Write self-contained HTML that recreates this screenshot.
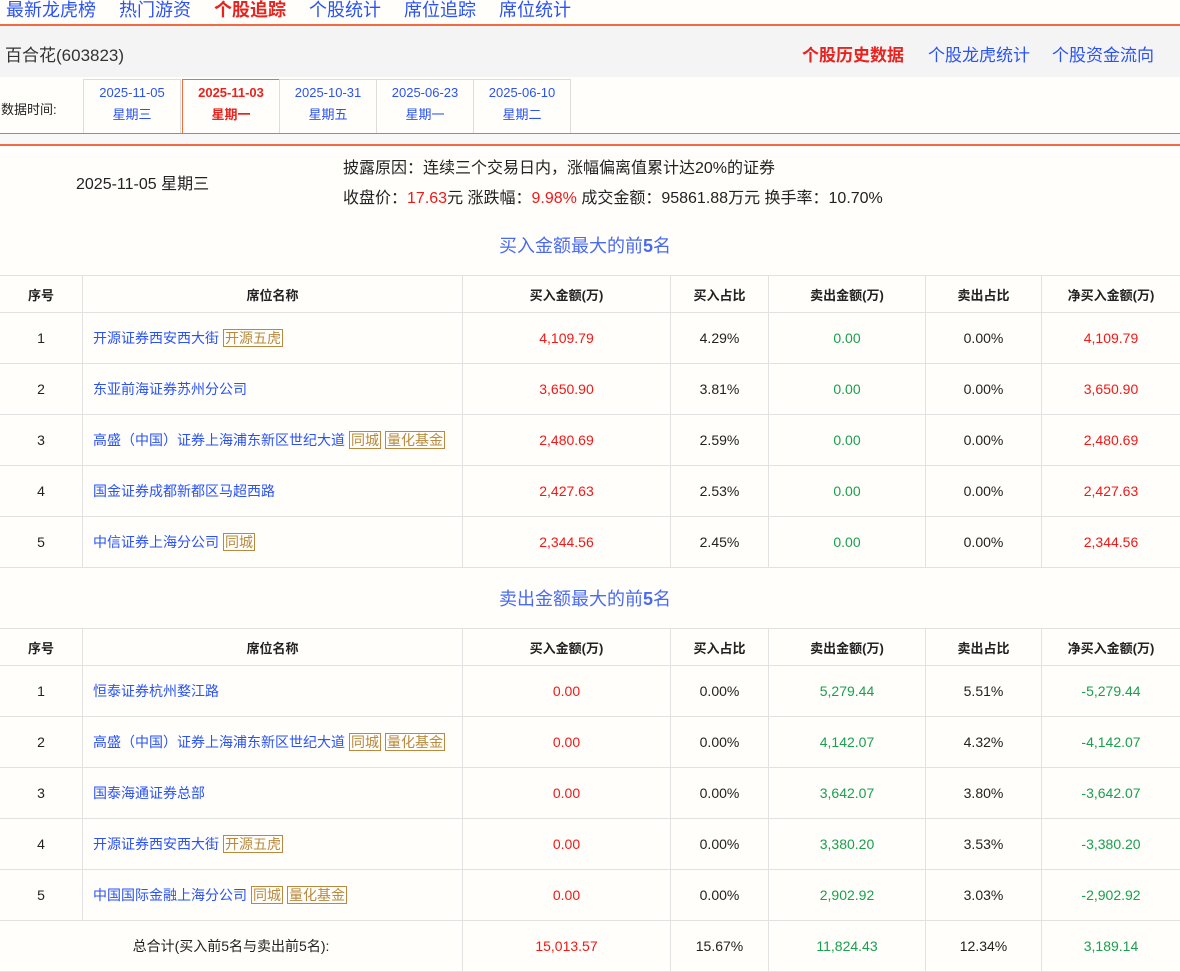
<!DOCTYPE html>
<html><head><meta charset="utf-8"><style>
*{margin:0;padding:0;box-sizing:border-box}
body{width:1180px;height:954px;overflow:hidden;background:#fffefa;font-family:"Liberation Sans","Noto Sans CJK SC",sans-serif;position:relative;color:#222}
.a{position:absolute;white-space:nowrap}
.nav{top:-4px;left:6px;font-size:18px;color:#2a52f5}
.nav span{margin-right:23px}
.nav .on{color:#e8231f;font-weight:bold}
.ol{position:absolute;left:0;width:1180px;height:2px;background:#f36b43}
.band{position:absolute;left:0;top:26px;width:1180px;height:51px;background:#f4f4f4}
.tab{position:absolute;top:79px;height:54px;width:98px;border:1px solid #ddd;border-bottom:none;text-align:center;font-size:13px;color:#2a52f5;line-height:22px;padding-top:2px;background:#fffefa}
.tab.on{border:1px solid #f36b43;border-bottom:none;color:#e8231f;font-weight:bold}
table{position:absolute;left:-1px;width:1181px;border-collapse:collapse;table-layout:fixed;font-size:14px}
td,th{border:1px solid #e2e2e2;text-align:center;height:51px}
th{height:37px;font-size:13px}
td.n{text-align:left;padding-left:10px;color:#2a52f5;font-size:14px}
.tg{border:1px solid #b8893f;color:#b8893f;padding:0 1px;margin-left:4px}
.r{color:#f01818}.g{color:#1a9f4f}
.t{font-size:18px;color:#4a6af0;text-align:center;width:1180px;left:-5px}
</style></head><body>
<div class="a nav"><span>最新龙虎榜</span><span>热门游资</span><span class="on">个股追踪</span><span>个股统计</span><span>席位追踪</span><span>席位统计</span></div>
<div class="ol" style="top:24px"></div>
<div class="band"></div>
<div class="a" style="left:5px;top:41px;font-size:17px;color:#333">百合花(603823)</div>
<div class="a" style="left:802px;top:41px;font-size:17px;color:#e8231f;font-weight:bold">个股历史数据</div>
<div class="a" style="left:928px;top:41px;font-size:17px;color:#2a52f5">个股龙虎统计</div>
<div class="a" style="left:1052px;top:41px;font-size:17px;color:#2a52f5">个股资金流向</div>
<div class="a" style="left:1px;top:99px;font-size:13px">数据时间:</div>
<div class="tab" style="left:83px">2025-11-05<br>星期三</div>
<div class="tab on" style="left:182px">2025-11-03<br>星期一</div>
<div class="tab" style="left:279px">2025-10-31<br>星期五</div>
<div class="tab" style="left:376px">2025-06-23<br>星期一</div>
<div class="tab" style="left:473px">2025-06-10<br>星期二</div>
<div class="ol" style="top:133px;height:1px;background:#f36b43"></div>
<div class="a" style="left:0;top:134px;width:1180px;height:10px;background:#f8f8f8"></div>
<div class="ol" style="top:144px"></div>
<div class="a" style="left:76px;top:170px;font-size:16px">2025-11-05 星期三</div>
<div class="a" style="left:343px;top:154px;font-size:16px">披露原因：连续三个交易日内，涨幅偏离值累计达20%的证券</div>
<div class="a" style="left:343px;top:184px;font-size:16px">收盘价：<span class="r">17.63</span>元 涨跌幅：<span class="r">9.98%</span> 成交金额：95861.88万元 换手率：10.70%</div>
<div class="a t" style="top:232px">买入金额最大的前<b>5</b>名</div>
<table style="top:275px">
<colgroup><col style="width:83px"><col style="width:380px"><col style="width:208px"><col style="width:98px"><col style="width:157px"><col style="width:116px"><col style="width:139px"></colgroup>
<tr><th>序号</th><th>席位名称</th><th>买入金额(万)</th><th>买入占比</th><th>卖出金额(万)</th><th>卖出占比</th><th>净买入金额(万)</th></tr>
<tr><td>1</td><td class="n">开源证券西安西大街<span class="tg">开源五虎</span></td><td class="r">4,109.79</td><td>4.29%</td><td class="g">0.00</td><td>0.00%</td><td class="r">4,109.79</td></tr>
<tr><td>2</td><td class="n">东亚前海证券苏州分公司</td><td class="r">3,650.90</td><td>3.81%</td><td class="g">0.00</td><td>0.00%</td><td class="r">3,650.90</td></tr>
<tr><td>3</td><td class="n">高盛（中国）证券上海浦东新区世纪大道<span class="tg">同城</span><span class="tg">量化基金</span></td><td class="r">2,480.69</td><td>2.59%</td><td class="g">0.00</td><td>0.00%</td><td class="r">2,480.69</td></tr>
<tr><td>4</td><td class="n">国金证券成都新都区马超西路</td><td class="r">2,427.63</td><td>2.53%</td><td class="g">0.00</td><td>0.00%</td><td class="r">2,427.63</td></tr>
<tr><td>5</td><td class="n">中信证券上海分公司<span class="tg">同城</span></td><td class="r">2,344.56</td><td>2.45%</td><td class="g">0.00</td><td>0.00%</td><td class="r">2,344.56</td></tr>
</table>
<div class="a t" style="top:585px">卖出金额最大的前<b>5</b>名</div>
<table style="top:628px">
<colgroup><col style="width:83px"><col style="width:380px"><col style="width:208px"><col style="width:98px"><col style="width:157px"><col style="width:116px"><col style="width:139px"></colgroup>
<tr><th>序号</th><th>席位名称</th><th>买入金额(万)</th><th>买入占比</th><th>卖出金额(万)</th><th>卖出占比</th><th>净买入金额(万)</th></tr>
<tr><td>1</td><td class="n">恒泰证券杭州婺江路</td><td class="r">0.00</td><td>0.00%</td><td class="g">5,279.44</td><td>5.51%</td><td class="g">-5,279.44</td></tr>
<tr><td>2</td><td class="n">高盛（中国）证券上海浦东新区世纪大道<span class="tg">同城</span><span class="tg">量化基金</span></td><td class="r">0.00</td><td>0.00%</td><td class="g">4,142.07</td><td>4.32%</td><td class="g">-4,142.07</td></tr>
<tr><td>3</td><td class="n">国泰海通证券总部</td><td class="r">0.00</td><td>0.00%</td><td class="g">3,642.07</td><td>3.80%</td><td class="g">-3,642.07</td></tr>
<tr><td>4</td><td class="n">开源证券西安西大街<span class="tg">开源五虎</span></td><td class="r">0.00</td><td>0.00%</td><td class="g">3,380.20</td><td>3.53%</td><td class="g">-3,380.20</td></tr>
<tr><td>5</td><td class="n">中国国际金融上海分公司<span class="tg">同城</span><span class="tg">量化基金</span></td><td class="r">0.00</td><td>0.00%</td><td class="g">2,902.92</td><td>3.03%</td><td class="g">-2,902.92</td></tr>
<tr><td colspan="2" style="font-size:14px">总合计(买入前5名与卖出前5名):</td><td class="r">15,013.57</td><td>15.67%</td><td class="g">11,824.43</td><td>12.34%</td><td class="g">3,189.14</td></tr>
</table>
</body></html>
